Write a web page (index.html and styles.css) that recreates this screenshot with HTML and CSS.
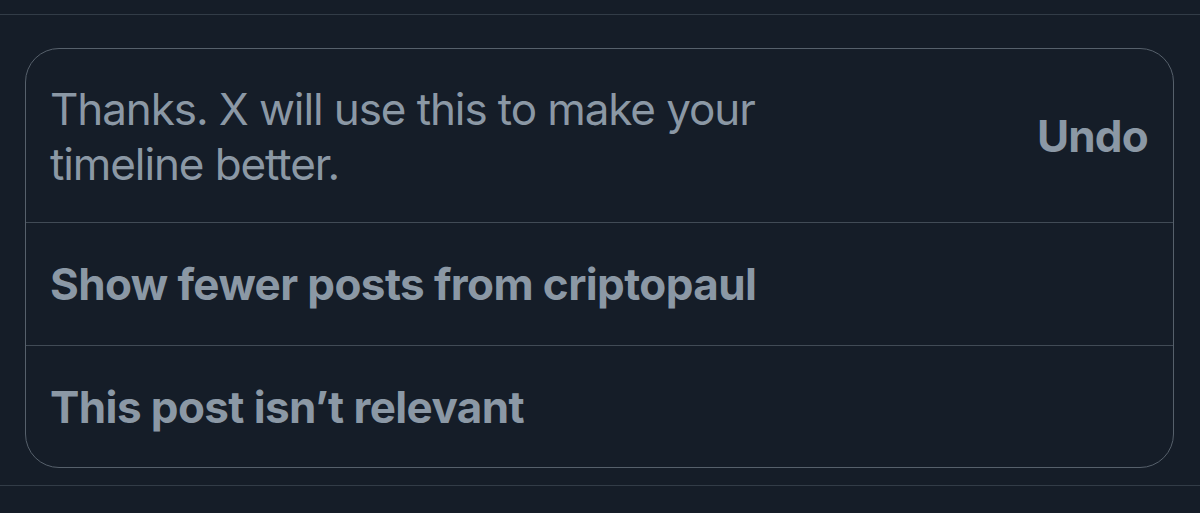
FILE: index.html
```html
<!DOCTYPE html>
<html>
<head>
<meta charset="utf-8">
<link rel="stylesheet" href="styles.css">
</head>
<body>
<section class="feed-item">
  <div class="card">
    <div class="row row-feedback">
      <p class="message">Thanks. X will use this to make your<br>timeline better.</p>
      <span class="undo">Undo</span>
    </div>
    <div class="row row-option">
      <span class="option">Show fewer posts from criptopaul</span>
    </div>
    <div class="row row-option row-last">
      <span class="option">This post isn’t relevant</span>
    </div>
  </div>
</section>
</body>
</html>
```

FILE: styles.css
```css
html, body {
  margin: 0;
  padding: 0;
  background: #151d28;
}
body {
  padding-top: 14px;
  font-family: "Inter", "Liberation Sans", sans-serif;
  color: #8b98a5;
}
.feed-item {
  border-top: 1px solid #323c47;
  border-bottom: 1px solid #323c47;
  padding: 33px 26px 17px 25px;
}
.card {
  border: 1px solid #56606b;
  border-radius: 34px;
  display: flex;
  flex-direction: column;
}
.row {
  display: flex;
  align-items: center;
  justify-content: space-between;
  padding: 0 25px 0 24px;
  border-bottom: 1px solid #414b56;
}
.row-last {
  border-bottom: none;
}
.row-feedback {
  height: 173px;
}
.row-option {
  height: 122px;
}
.row-last {
  height: 121px;
}
.message {
  margin: 3px 0 0;
  font-size: 44px;
  line-height: 55px;
  font-weight: 400;
  letter-spacing: -1.1px;
}
.undo {
  font-size: 44px;
  font-weight: 700;
  letter-spacing: -0.8px;
}
.option {
  font-size: 44px;
  font-weight: 700;
  letter-spacing: -0.6px;
}
```
